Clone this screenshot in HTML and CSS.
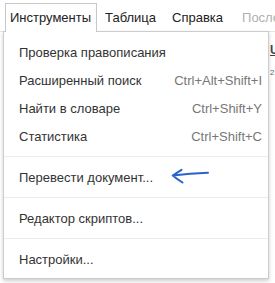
FILE: index.html
```html
<!DOCTYPE html>
<html lang="ru">
<head>
<meta charset="utf-8">
<link rel="stylesheet" href="styles.css">
</head>
<body>
<div class="menubar">
  <div class="mb-item tab">Инструменты</div>
  <div class="mb-item">Таблица</div>
  <div class="mb-item">Справка</div>
  <div class="mb-item disabled">После</div>
</div>
<div class="below">
  <div class="menu">
    <div class="item"><span>Проверка правописания</span></div>
    <div class="item"><span>Расширенный поиск</span><span class="sc">Ctrl+Alt+Shift+I</span></div>
    <div class="item"><span>Найти в словаре</span><span class="sc">Ctrl+Shift+Y</span></div>
    <div class="item"><span>Статистика</span><span class="sc">Ctrl+Shift+C</span></div>
    <div class="sep"></div>
    <div class="item"><span class="grp"><span>Перевести документ...</span><svg class="arrow" width="40" height="18" viewBox="0 0 40 18"><path d="M38 4.7 Q20 5.4 2.7 7.5 M11.5 1.8 Q6.5 5 2.7 7.5 Q7 11 12.5 14.5" fill="none" stroke="#2a64c8" stroke-width="2" stroke-linecap="round" stroke-linejoin="round"/></svg></span></div>
    <div class="sep"></div>
    <div class="item"><span>Редактор скриптов...</span></div>
    <div class="sep"></div>
    <div class="item"><span>Настройки...</span></div>
  </div>
  <div class="side">
    <div class="u">U</div>
    <div class="sup">2</div>
  </div>
</div>
</body>
</html>
```
FILE: styles.css
```css
html, body {
  margin: 0;
  padding: 0;
  background: #fff;
}
body {
  font-family: "Liberation Sans", Arial, sans-serif;
  font-size: 13px;
  color: #222;
  width: 275px;
  height: 283px;
  overflow: hidden;
}
.menubar {
  display: flex;
  align-items: flex-start;
  height: 31px;
  border-bottom: 1px solid #e5e5e5;
  padding-left: 5px;
}
.mb-item {
  margin-top: 3px;
  height: 28px;
  line-height: 28px;
  border: 1px solid transparent;
  border-bottom: none;
  padding: 0 7px;
  white-space: nowrap;
}
.tab {
  position: relative;
  z-index: 2;
  background: #fff;
  border-color: #c8c8c8;
  padding: 0 5px 0 4px;
}
.disabled {
  color: #b0b0b0;
  margin-left: 3px;
}
.below {
  display: flex;
  margin-top: -1px;
}
.menu {
  position: relative;
  z-index: 1;
  margin-left: 3px;
  width: 266px;
  box-sizing: border-box;
  flex: none;
  background: #fff;
  border: 1px solid rgba(0, 0, 0, 0.2);
  box-shadow: 0 2px 4px rgba(0, 0, 0, 0.2);
  padding: 6px 0 5px;
}
.item {
  display: flex;
  justify-content: space-between;
  align-items: center;
  height: 28px;
  padding: 0 6px 0 15px;
  color: #333;
  white-space: nowrap;
}
.sc {
  color: #777;
}
.grp {
  display: flex;
  align-items: center;
}
.arrow {
  margin-left: 17px;
  display: block;
}
.sep {
  height: 1px;
  background: #ebebeb;
  margin: 6px 0;
}
.side {
  flex: 1;
  overflow: hidden;
  padding-left: 1px;
}
.u {
  margin-top: 14px;
  font-weight: bold;
  font-size: 12px;
  line-height: 10px;
  text-decoration: underline;
  color: #444;
}
.sup {
  margin-top: 14px;
  font-size: 8px;
  line-height: 8px;
  color: #666;
}
```
